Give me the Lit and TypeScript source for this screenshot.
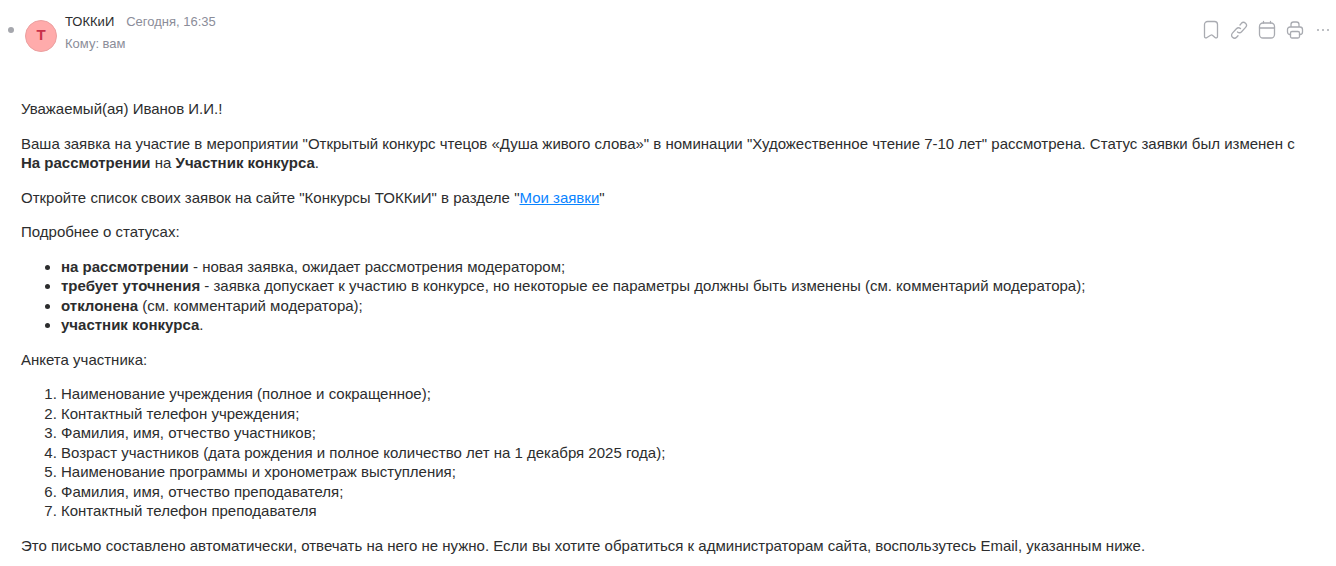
import { LitElement, html, css } from "lit"
import { customElement } from "lit/decorators.js"

@customElement("app-root")
export class AppRoot extends LitElement {
  static styles = css`
    :host {
      display: block;
      height: 566px;
      overflow: hidden;
      background: #fff;
      font-family: "Liberation Sans", Arial, sans-serif;
      color: #2c2d2e;
    }

    .header {
      display: flex;
      align-items: flex-start;
      height: 52px;
      padding: 13px 3px 0 8px;
      box-sizing: border-box;
    }

    .dot {
      width: 6px;
      height: 6px;
      border-radius: 50%;
      background: #a5a7ad;
      margin: 14px 11px 0 0;
      flex: none;
    }

    .avatar {
      width: 32px;
      height: 32px;
      margin-top: 7px;
      border-radius: 50%;
      box-sizing: border-box;
      background: #ffabab;
      border: 1px solid #eba0a0;
      color: #c9304a;
      font-size: 15px;
      font-weight: 700;
      line-height: 28px;
      text-align: center;
      flex: none;
    }

    .meta {
      margin: 1px 0 0 8px;
      font-size: 13px;
      line-height: 16px;
      color: #8b8d99;
    }

    .from {
      display: flex;
      gap: 12px;
      align-items: baseline;
      height: 22px;
    }

    .name {
      color: #2c2d2e;
    }

    .actions {
      margin-left: auto;
      display: flex;
      align-items: center;
      gap: 8px;
      margin-top: 7px;
      color: #a9abb1;
    }

    .actions svg {
      display: block;
      width: 20px;
      height: 20px;
      fill: none;
      stroke: currentColor;
      stroke-width: 1.3;
      stroke-linecap: round;
      stroke-linejoin: round;
    }

    .body {
      padding: 47px 21px 0;
      font-size: 15px;
      line-height: 19.5px;
    }

    p {
      margin: 0 0 15px;
    }

    ul,
    ol {
      margin: 0 0 15px;
      padding-left: 40px;
    }

    .link {
      color: #0a84ff;
    }
  `

  render() {
    return html`
      <div class="header">
        <div class="dot"></div>
        <div class="avatar">Т</div>
        <div class="meta">
          <div class="from"><span class="name">ТОККиИ</span><span>Сегодня, 16:35</span></div>
          <div>Кому: вам</div>
        </div>
        <div class="actions">
          <svg viewBox="0 0 20 20"><path d="M3.500 4.500a3 3 0 0 1 3-3h7a3 3 0 0 1 3 3v12c0 1.400-1.500 1.900-2.500 1l-2.600-2.300a1.500 1.500 0 0 0-1.800 0L6 17.500c-1 .900-2.500.400-2.500-1z" /></svg>
          <svg viewBox="0 0 20 20"><path d="M8.500 12c1.300 1 3 .900 4.100-.300l4-4.300c1.100-1.200 1.100-3.100-.100-4.200s-3-1.100-4.100.100L11 5M11.500 8.500c-1.300-1-3-.900-4.100.300l-4 4.300c-1.100 1.200-1.100 3.100.100 4.200s3 1.100 4.100-.100l1.400-1.500" /></svg>
          <svg viewBox="0 0 20 20"><rect x="2.500" y="3" width="15" height="15" rx="3.500" /><path d="M2.500 8h15M6.500 1.500V3M13.500 1.500V3" /></svg>
          <svg viewBox="0 0 20 20"><path d="M6 7V4.500A2.500 2.500 0 0 1 8.500 2h3A2.500 2.500 0 0 1 14 4.500V7M5.500 14.500h-.5A2.500 2.500 0 0 1 2.500 12v-2.500A2.500 2.500 0 0 1 5 7h10a2.500 2.500 0 0 1 2.500 2.500V12a2.500 2.500 0 0 1-2.500 2.500h-.5" /><rect x="5.500" y="11.500" width="9" height="6.500" rx="1.500" /></svg>
          <svg viewBox="0 0 20 20"><circle cx="5" cy="10" r="1" fill="currentColor" stroke="none" /><circle cx="10" cy="10" r="1" fill="currentColor" stroke="none" /><circle cx="15" cy="10" r="1" fill="currentColor" stroke="none" /></svg>
        </div>
      </div>
      <div class="body">
        <p>Уважаемый(ая) Иванов И.И.!</p>
        <p>
          Ваша заявка на участие в мероприятии "Открытый конкурс чтецов «Душа живого слова»" в номинации
          "Художественное чтение 7-10 лет" рассмотрена. Статус заявки был изменен с
          <b>На рассмотрении</b> на <b>Участник конкурса</b>.
        </p>
        <p>Откройте список своих заявок на сайте "Конкурсы ТОККиИ" в разделе "<a class="link" href="#">Мои заявки</a>"</p>
        <p>Подробнее о статусах:</p>
        <ul>
          <li><b>на рассмотрении</b> - новая заявка, ожидает рассмотрения модератором;</li>
          <li><b>требует уточнения</b> - заявка допускает к участию в конкурсе, но некоторые ее параметры должны быть изменены (см. комментарий модератора);</li>
          <li><b>отклонена</b> (см. комментарий модератора);</li>
          <li><b>участник конкурса</b>.</li>
        </ul>
        <p>Анкета участника:</p>
        <ol>
          <li>Наименование учреждения (полное и сокращенное);</li>
          <li>Контактный телефон учреждения;</li>
          <li>Фамилия, имя, отчество участников;</li>
          <li>Возраст участников (дата рождения и полное количество лет на 1 декабря 2025 года);</li>
          <li>Наименование программы и хронометраж выступления;</li>
          <li>Фамилия, имя, отчество преподавателя;</li>
          <li>Контактный телефон преподавателя</li>
        </ol>
        <p>Это письмо составлено автоматически, отвечать на него не нужно. Если вы хотите обратиться к администраторам сайта, воспользутесь Email, указанным ниже.</p>
      </div>
    `
  }
}

declare global {
  interface HTMLElementTagNameMap {
    "app-root": AppRoot
  }
}
